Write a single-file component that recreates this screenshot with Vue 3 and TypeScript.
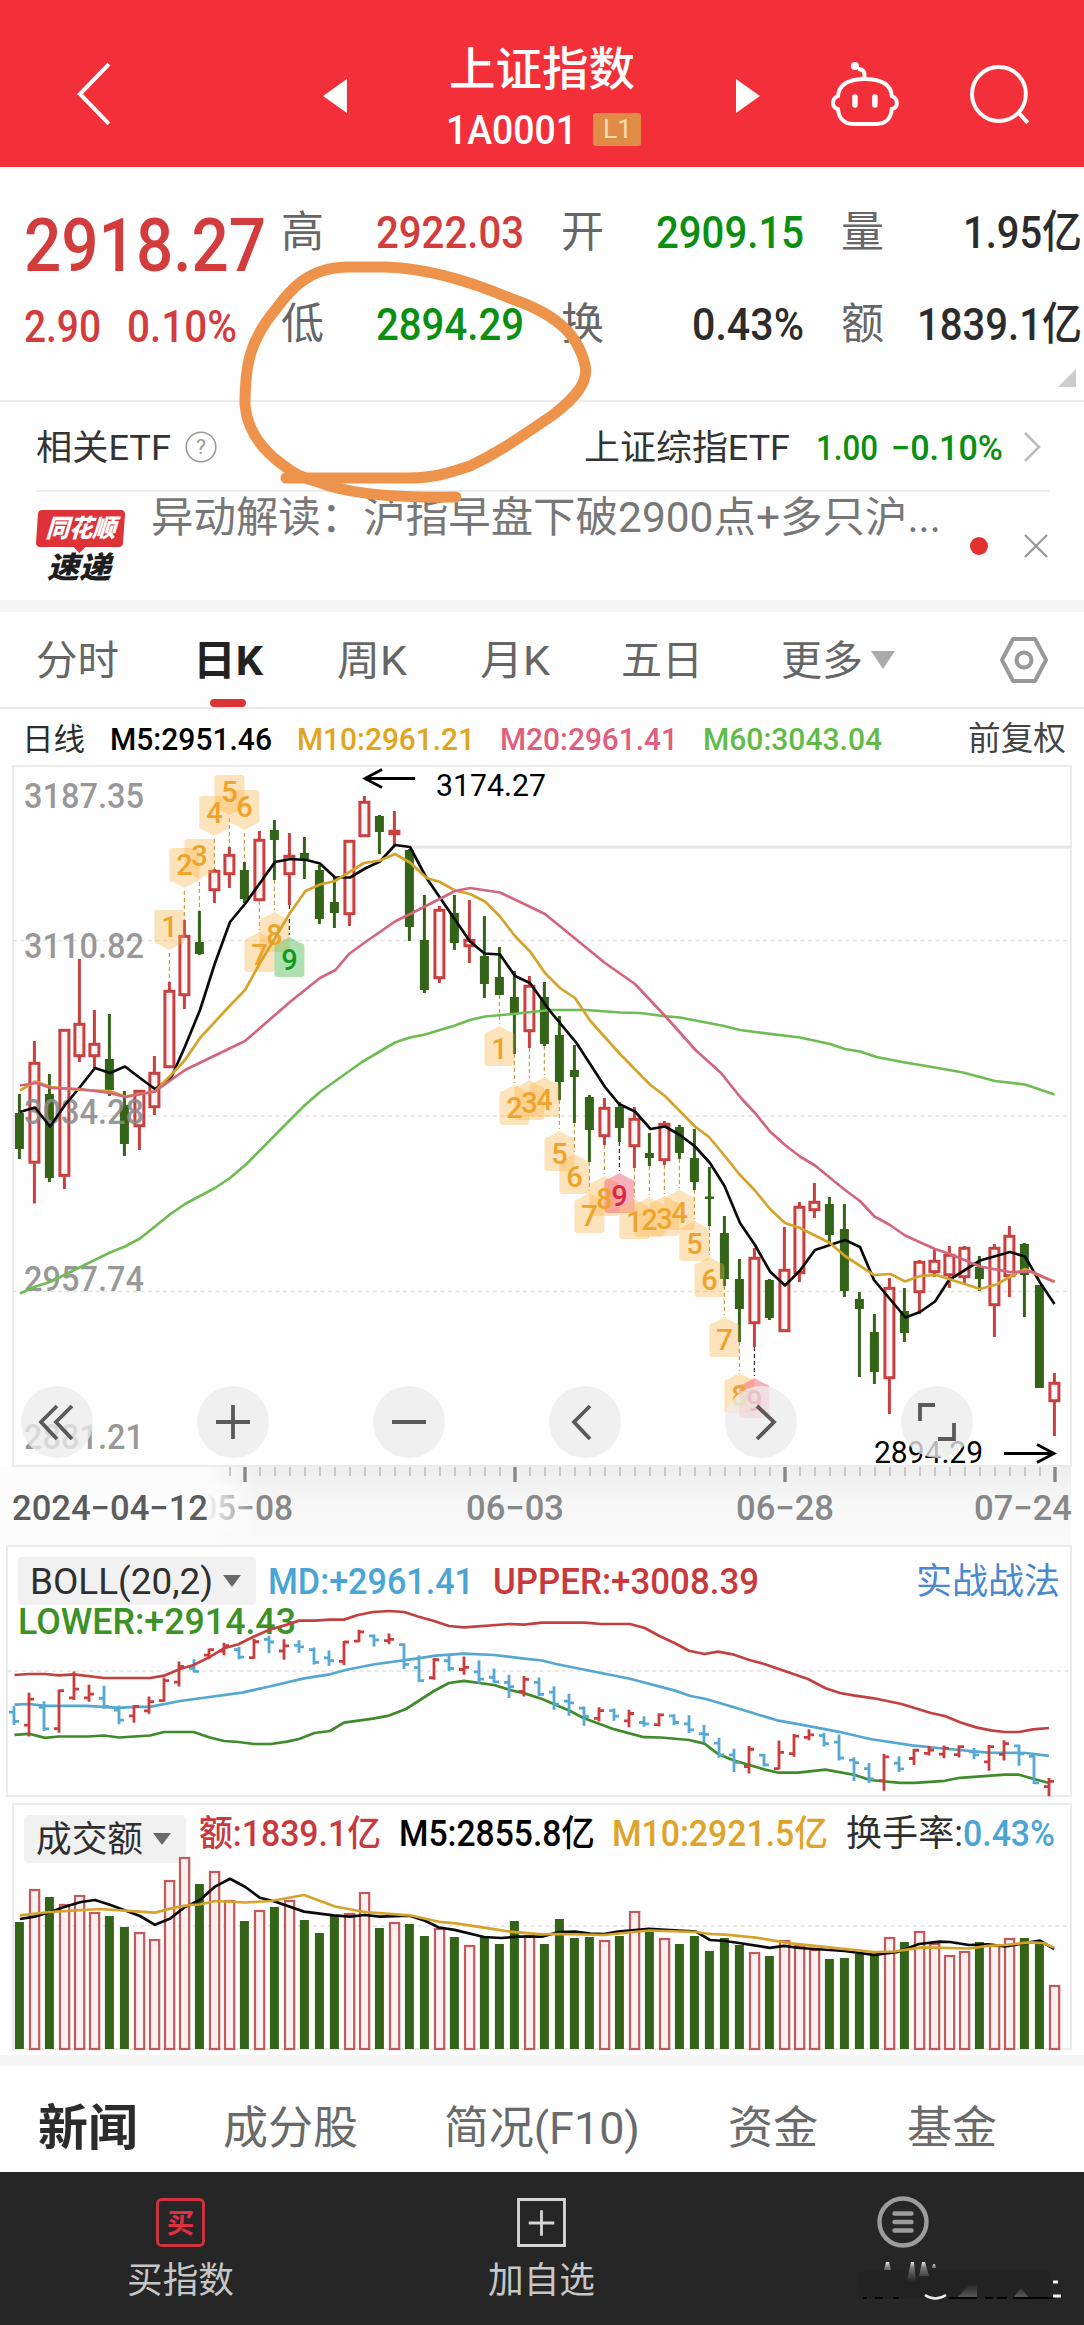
<template>
  <div class="stock-page">
    <!-- 顶部标题栏 -->
    <header class="top-bar">
      <svg class="icon-back" viewBox="0 0 36 64"><path d="M33 2 L4 32 L33 62" /></svg>
      <svg class="icon-prev" viewBox="0 0 24 34"><path d="M24 0 V34 L0 17 Z" /></svg>
      <div class="title-box">
        <FitText text="上证指数" :w="186" :size="46" class="medium" />
        <div class="code-row">
          <FitText text="1A0001" :w="131" :size="40" class="medium" />
          <span class="level"><FitText text="L1" :w="29" :size="26" /></span>
        </div>
      </div>
      <svg class="icon-next" viewBox="0 0 24 34"><path d="M0 0 V34 L24 17 Z" /></svg>
      <svg class="icon-robot" viewBox="0 0 70 66">
        <path d="M35 18 C52 18 61 24 62 35 Q67 37 67 42 Q67 47 62 48 C61 59 54 63 47 63 H23 C16 63 9 59 8 48 Q3 47 3 42 Q3 37 8 35 C9 24 18 18 35 18 Z" />
        <path d="M34 18 C36 11 33 8 28 8" />
        <circle cx="25" cy="5" r="4" class="solid" />
        <path d="M25 36 V44 M45 36 V44" class="eyes" />
      </svg>
      <svg class="icon-search" viewBox="0 0 62 62"><circle cx="29" cy="30" r="27" /><path d="M48 48 L58 59" /></svg>
    </header>

    <!-- 行情数据 -->
    <section class="quote">
      <div class="price-col">
        <FitText text="2918.27" :w="242" :size="74" class="up medium" />
        <div class="change-row">
          <FitText text="2.90" :w="77" :size="44" class="up medium" />
          <FitText text="0.10%" :w="110" :size="44" class="up medium" />
        </div>
      </div>
      <div class="stat-cols">
        <div v-for="item in stats" :key="item.label" class="stat">
          <FitText :text="item.label" :w="43" :size="43" class="stat-label" />
          <FitText :text="item.value" :w="item.w" :size="45" :class="item.cls" class="medium" />
        </div>
      </div>
      <svg class="corner" viewBox="0 0 18 18"><path d="M18 0 V18 H0 Z" /></svg>
    </section>

    <section class="etf-row">
      <FitText text="相关ETF" :w="135" :size="35" />
      <svg class="icon-help" viewBox="0 0 32 32"><circle cx="16" cy="16" r="14.8" /><text x="16" y="23" text-anchor="middle">?</text></svg>
      <div class="etf-right">
        <FitText text="上证综指ETF" :w="206" :size="35" />
        <FitText text="1.00" :w="62" :size="35" class="down medium" />
        <FitText text="−0.10%" :w="112" :size="35" class="down medium" />
        <svg class="icon-more" viewBox="0 0 18 32"><path d="M2 2 L16 16 L2 30" /></svg>
      </div>
    </section>

    <section class="news-row">
      <div class="brand">
        <span class="brand-top"><FitText text="同花顺" :w="70" :size="25" /></span>
        <FitText text="速递" :w="64" :size="30" class="brand-bottom" />
      </div>
      <FitText text="异动解读：沪指早盘下破2900点+多只沪..." :w="790" :size="42" class="news-text" />
      <span class="dot"></span>
      <svg class="icon-close" viewBox="0 0 26 26"><path d="M2 2 L24 24 M24 2 L2 24" /></svg>
    </section>

    <div class="gap"></div>

    <!-- 周期切换 -->
    <nav class="period-tabs">
      <div v-for="tab in periods" :key="tab.text" class="period" :class="{ active: tab.active }">
        <FitText :text="tab.text" :w="tab.w" :size="41" />
      </div>
      <svg class="icon-drop" viewBox="0 0 24 18"><path d="M0 0 H24 L12 18 Z" /></svg>
      <svg class="icon-setting" viewBox="0 0 48 46"><path d="M13 2 H35 L46 23 L35 44 H13 L2 23 Z" /><circle cx="24" cy="23" r="7.5" /></svg>
    </nav>

    <div class="ma-row">
      <FitText text="日线" :w="63" :size="31" class="dark" />
      <FitText text="M5:2951.46" :w="162" :size="32" class="black medium" />
      <FitText text="M10:2961.21" :w="178" :size="32" class="yellow medium" />
      <FitText text="M20:2961.41" :w="178" :size="32" class="pink medium" />
      <FitText text="M60:3043.04" :w="179" :size="32" class="lime medium" />
      <FitText text="前复权" :w="98" :size="33" class="restore" />
    </div>

    <!-- K线主图 -->
    <div class="main-chart">
      <svg class="chart" viewBox="0 765 1084 780" width="1084" height="780">
        <defs>
          <linearGradient id="axisBg" x1="0" y1="0" x2="0" y2="1">
            <stop offset="0" stop-color="#eeeeee" />
            <stop offset="0.5" stop-color="#f7f7f7" />
            <stop offset="1" stop-color="#fafafa" />
          </linearGradient>
          <linearGradient id="axisFade" x1="0" y1="0" x2="1" y2="0">
            <stop offset="0" stop-color="#fcfcfc" />
            <stop offset="0.8" stop-color="#fcfcfc" />
            <stop offset="0.84" stop-color="#fcfcfc" stop-opacity="0.75" />
            <stop offset="1" stop-color="#fcfcfc" stop-opacity="0" />
          </linearGradient>
        </defs>
        <rect x="0" y="1466" width="1071" height="79" fill="url(#axisBg)" />
        <rect x="0" y="1466" width="258" height="79" fill="url(#axisFade)" />
        <rect x="13" y="766" width="1058" height="700" class="frame" />
        <path d="M13 940.5 H1071 M13 1116 H1071 M13 1291.5 H1071" class="grid" />
        <path d="M410 847.3 H1071" class="gap-line" />

        <g v-for="(c, i) in candles" :key="'c' + i" :class="c[0] ? 'candle-up' : 'candle-down'">
          <template v-if="c[0]">
            <path :d="`M${cx(i)} ${c[1]} V${c[2]} M${cx(i)} ${c[3]} V${c[4]}`" />
            <rect :x="cx(i) - 4.5" :y="c[2] + 1.3" width="9" :height="Math.max(c[3] - c[2] - 2.6, 1)" />
          </template>
          <template v-else>
            <path :d="`M${cx(i)} ${c[1]} V${c[4]}`" />
            <rect :x="cx(i) - 4.5" :y="c[2]" width="9" :height="c[3] - c[2]" />
          </template>
        </g>

        <g v-for="(s, k) in signals" :key="'s' + k" :class="'signal-' + s.kind">
          <path :d="signalLine(s)" class="signal-line" />
          <path :d="signalShape(s)" class="signal-tag" />
        </g>
        <text
          v-for="(s, k) in signals"
          :key="'n' + k"
          :x="cx(s.i)"
          :y="s.top + (s.above ? 27 : 33)"
          text-anchor="middle"
          :class="['signal-num', 'num-' + s.kind]"
        >{{ s.n }}</text>

        <text v-for="p in priceLabels" :key="p.text" x="24" :y="p.y" textLength="120" lengthAdjust="spacingAndGlyphs" class="price-label">{{ p.text }}</text>

        <polyline :points="m60" class="line m60" />
        <polyline :points="m5" class="line m5" />
        <polyline :points="m10" class="line m10" />
        <polyline :points="m20" class="line m20" />

        <text x="436" y="796" textLength="110" lengthAdjust="spacingAndGlyphs" class="extreme">3174.27</text>
        <path d="M415 778.5 H365 M382 769.5 L365 778.5 L382 787.5" class="arrow" />
        <text x="874" y="1463" textLength="109" lengthAdjust="spacingAndGlyphs" class="extreme">2894.29</text>
        <path d="M1004 1453.5 H1054 M1037 1444.5 L1054 1453.5 L1037 1462.5" class="arrow" />

        <path :d="minorTicks" class="tick" />
        <path d="M245 1467 V1482 M515 1467 V1482 M785 1467 V1482 M1055 1467 V1482" class="tick-major" />
        <text x="198" y="1520" textLength="95" lengthAdjust="spacingAndGlyphs" class="date">05−08</text>
        <rect x="0" y="1483" width="258" height="50" fill="url(#axisFade)" />
        <text x="12" y="1520" textLength="196" lengthAdjust="spacingAndGlyphs" class="date first">2024−04−12</text>
        <text x="466" y="1520" textLength="98" lengthAdjust="spacingAndGlyphs" class="date">06−03</text>
        <text x="736" y="1520" textLength="98" lengthAdjust="spacingAndGlyphs" class="date">06−28</text>
        <text x="974" y="1520" textLength="98" lengthAdjust="spacingAndGlyphs" class="date">07−24</text>
      </svg>
      <div class="chart-tools">
        <button v-for="t in tools" :key="t.name" class="tool">
          <svg viewBox="0 0 72 72"><path :d="t.d" /></svg>
        </button>
      </div>
    </div>

    <!-- BOLL 指标 -->
    <svg class="chart" viewBox="0 1545 1084 255" width="1084" height="255">
      <rect x="7" y="1546" width="1064" height="250" class="frame" />
      <path d="M7 1671 H1071" class="grid" />
      <rect x="18" y="1557" width="238" height="48" rx="4" class="chip" />
      <path d="M223 1575 H241 L232 1587 Z" class="chip-arrow" />
      <text x="30" y="1594" textLength="183" lengthAdjust="spacingAndGlyphs" class="ind dark">BOLL(20,2)</text>
      <text x="268" y="1594" textLength="206" lengthAdjust="spacingAndGlyphs" class="ind blue">MD:+2961.41</text>
      <text x="493" y="1594" textLength="266" lengthAdjust="spacingAndGlyphs" class="ind red">UPPER:+3008.39</text>
      <text x="916" y="1594" textLength="144" lengthAdjust="spacingAndGlyphs" class="ind link">实战战法</text>
      <text x="18" y="1634" textLength="278" lengthAdjust="spacingAndGlyphs" class="ind green">LOWER:+2914.43</text>
      <polyline :points="bollLower" class="line boll-lower" />
      <polyline :points="bollMid" class="line boll-mid" />
      <path
        v-for="(c, i) in candles"
        :key="i"
        :d="bollBar(c, i)"
        class="boll-bar"
        :class="c[0] ? 'bar-up' : 'bar-down'"
      />
      <polyline :points="bollUpper" class="line boll-upper" />
    </svg>

    <!-- 成交额 -->
    <svg class="chart" viewBox="0 1800 1084 255" width="1084" height="255">
      <rect x="13" y="1804" width="1058" height="245" class="frame" />
      <path d="M13 1926 H1071" class="grid" />
      <rect x="24" y="1815" width="162" height="48" rx="5" class="chip" />
      <g v-for="(v, i) in volumes" :key="i">
        <rect v-if="candles[i][0]" :x="cx(i) - 4.4" :y="v + 1" width="9.2" :height="2048 - v" class="vol-up" />
        <rect v-else :x="cx(i) - 4.5" :y="v" width="9" :height="2049 - v" class="vol-down" />
      </g>
      <path d="M153 1833 H171 L162 1845 Z" class="chip-arrow" />
      <text x="36" y="1852" textLength="107" lengthAdjust="spacingAndGlyphs" class="ind dark">成交额</text>
      <text x="199" y="1846" textLength="182" lengthAdjust="spacingAndGlyphs" class="ind red">额:1839.1亿</text>
      <text x="399" y="1846" textLength="196" lengthAdjust="spacingAndGlyphs" class="ind black">M5:2855.8亿</text>
      <text x="612" y="1846" textLength="216" lengthAdjust="spacingAndGlyphs" class="ind yellow">M10:2921.5亿</text>
      <text x="846" y="1846" textLength="117" lengthAdjust="spacingAndGlyphs" class="ind dark">换手率:</text>
      <text x="963" y="1846" textLength="92" lengthAdjust="spacingAndGlyphs" class="ind blue">0.43%</text>
      <polyline :points="volM5" class="line m5" />
      <polyline :points="volM10" class="line m10" />
    </svg>

    <div class="gap small"></div>

    <nav class="info-tabs">
      <FitText text="新闻" :w="100" :size="49" class="current" />
      <FitText text="成分股" :w="135" :size="45" />
      <FitText text="简况(F10)" :w="196" :size="45" />
      <FitText text="资金" :w="90" :size="45" />
      <FitText text="基金" :w="90" :size="45" />
    </nav>

    <footer class="bottom-bar">
      <div class="action">
        <svg class="action-icon buy" viewBox="0 0 48 48"><rect x="1.5" y="1.5" width="45" height="45" rx="4" /><text x="24" y="34" text-anchor="middle">买</text></svg>
        <FitText text="买指数" :w="107" :size="36" />
      </div>
      <div class="action">
        <svg class="action-icon add" viewBox="0 0 48 48"><path d="M1.5 1.5 H46.5 V46.5 H1.5 Z M24 12 V37 M11.5 24.5 H36.5" /></svg>
        <FitText text="加自选" :w="107" :size="36" />
      </div>
      <div class="action">
        <svg class="action-icon menu" viewBox="0 0 52 52"><circle cx="26" cy="26" r="23.5" /><path d="M17.5 17.5 H34.5 M17.5 26 H34.5 M17.5 34.5 H34.5" /></svg>
        <svg class="smudge" viewBox="0 0 210 42">
          <defs>
            <linearGradient id="streak" x1="0" y1="0" x2="0" y2="1">
              <stop offset="0" stop-color="#e8e8e8" />
              <stop offset="0.3" stop-color="#777777" />
              <stop offset="1" stop-color="#262626" />
            </linearGradient>
            <linearGradient id="patch" x1="0" y1="0" x2="0" y2="1">
              <stop offset="0" stop-color="#262626" />
              <stop offset="1" stop-color="#5c5c5c" />
            </linearGradient>
          </defs>
          <rect x="6" y="9" width="192" height="28" rx="8" fill="#232323" />
          <path d="M33 1 H36 L38 9 H31 Z M58 1 L61 1 L63 20 H54 Z M69 1 H72 L76 15 H66 Z M80 3 H82 L83 7 H79 Z" fill="url(#streak)" />
          <path d="M104 37 L116 24 H124 V37 Z M160 37 L168 27 L176 37 Z" fill="url(#patch)" />
          <path d="M10 37 H14 M22 37 H30 M40 37 H46 M96 37 H124 M132 37 H140 M144 37 H154 M160 37 H202" stroke="#050505" stroke-width="2" fill="none" />
          <path d="M72 34 Q82 41 93 34" stroke="#eee" stroke-width="2.5" fill="none" />
          <path d="M200 21 H205 M200 35 H208" stroke="#f5f5f5" stroke-width="3" fill="none" />
        </svg>
      </div>
    </footer>

    <!-- 手绘圈注 -->
    <svg class="scribble" viewBox="236 255 360 250" width="360" height="250">
      <path d="M286 478 H408 C432 478 446 474 470 466 C500 452 520 437 553 415 C575 398 589 382 585 365 C577 330 550 312 512 299 C465 279 425 268 385 267 H346 C310 268 292 287 276 309 C250 340 245 364 245 405 C247 427 258 447 283 465 C295 475 305 479 318 482 C350 495 400 498 456 497" />
    </svg>
  </div>
</template>

<script setup lang="ts">
import { computed, h } from 'vue'
import type { FunctionalComponent } from 'vue'

// 定宽文字
interface FitProps {
  text: string
  w: number
  size: number
}

const FitText: FunctionalComponent<FitProps> = (props) =>
  h('svg', { width: props.w, height: props.size, style: { display: 'block', overflow: 'visible', flex: 'none' } }, [
    h('text', {
      x: 0,
      y: props.size * 0.86,
      textLength: props.w,
      lengthAdjust: 'spacingAndGlyphs',
      'font-size': props.size,
      fill: 'currentColor'
    }, props.text)
  ])
FitText.props = ['text', 'w', 'size']

// [阳线, 最高, 实体上, 实体下, 最低]
type Candle = [number, number, number, number, number]

interface Signal {
  i: number
  n: number
  top: number
  above: boolean
  kind: string
}

const stats = [
  { label: '高', value: '2922.03', w: 148, cls: 'up' },
  { label: '开', value: '2909.15', w: 148, cls: 'down' },
  { label: '量', value: '1.95亿', w: 119, cls: 'dark' },
  { label: '低', value: '2894.29', w: 148, cls: 'down' },
  { label: '换', value: '0.43%', w: 112, cls: 'dark' },
  { label: '额', value: '1839.1亿', w: 165, cls: 'dark' }
]

const periods = [
  { text: '分时', w: 83, active: false },
  { text: '日K', w: 70, active: true },
  { text: '周K', w: 70, active: false },
  { text: '月K', w: 70, active: false },
  { text: '五日', w: 82, active: false },
  { text: '更多', w: 82, active: false }
]

const tools = [
  { name: 'fast', d: 'M36 20 L20 36 L36 53 M51 20 L35 36 L51 53' },
  { name: 'plus', d: 'M36 19 V53 M19 36 H53' },
  { name: 'minus', d: 'M19 36 H53' },
  { name: 'left', d: 'M41 20 L25 36 L41 53' },
  { name: 'right', d: 'M32 20 L49 36 L32 53' },
  { name: 'full', d: 'M34 19 H19 V35 M37 53 H53 V37' }
]

const priceLabels = [
  { text: '3187.35', y: 808 },
  { text: '3110.82', y: 958 },
  { text: '3034.28', y: 1124 },
  { text: '2957.74', y: 1291 },
  { text: '2881.21', y: 1449 }
]

const candles: Candle[] = [
  [0, 1094, 1113, 1149, 1159], [1, 1041, 1062, 1163.5, 1203.5], [0, 1074, 1094, 1178, 1182], [1, 1029, 1029, 1176.7, 1189],
  [1, 959, 1023, 1057, 1062], [1, 1010, 1043, 1057, 1068], [0, 1014, 1059, 1090, 1096], [0, 1091, 1105, 1144, 1156],
  [1, 1090, 1090, 1127, 1150], [1, 1056, 1072, 1108, 1115], [1, 982, 990, 1068, 1068], [1, 920, 935, 996, 1009],
  [0, 911, 942, 954, 955], [1, 869, 870, 891, 903], [1, 847, 854, 875, 888], [0, 862, 870, 899, 903],
  [1, 831, 839, 901, 901], [0, 820, 830, 840, 880], [1, 833, 855, 875, 905], [0, 837, 853, 859, 879],
  [0, 865, 870, 919, 924], [0, 877, 902, 913, 928], [1, 840, 840, 915, 926], [1, 796, 801, 837, 837],
  [0, 815, 816, 832, 854], [1, 811, 830, 835, 845], [0, 849, 850, 927, 941], [0, 895, 940, 990, 993],
  [1, 906, 909, 979, 983], [0, 895, 913, 943, 950], [1, 900, 939, 947, 963], [0, 916, 956, 984, 998],
  [0, 947, 977, 995, 995], [0, 971, 997, 1014, 1054], [1, 976, 985, 1032, 1048], [0, 982, 997, 1044, 1046],
  [0, 1016, 1035, 1082, 1100], [0, 1045, 1070, 1077, 1123], [0, 1095, 1097, 1130, 1162], [1, 1098, 1107, 1137, 1145],
  [0, 1102, 1107, 1128, 1142], [1, 1107, 1118, 1147, 1168], [0, 1133, 1153, 1158, 1166], [1, 1121, 1123, 1161, 1165],
  [0, 1125, 1127, 1153, 1159], [0, 1129, 1158, 1182, 1190], [0, 1167, 1196.5, 1199, 1226], [0, 1216, 1233, 1279, 1286],
  [0, 1259, 1279, 1309, 1342], [1, 1248, 1257, 1324, 1347], [0, 1279, 1280, 1318, 1320], [1, 1227, 1269, 1332, 1332],
  [1, 1202, 1206, 1274, 1282], [1, 1183, 1201, 1211, 1218], [0, 1197, 1204, 1235, 1242], [0, 1204, 1229, 1291, 1297],
  [0, 1292, 1299, 1309, 1377], [0, 1314, 1332, 1372, 1384], [1, 1278, 1287, 1379, 1414], [0, 1288, 1311, 1333, 1342],
  [1, 1260, 1261, 1293, 1314], [1, 1248, 1260, 1273, 1277], [1, 1246, 1254, 1276, 1288], [1, 1246, 1247, 1278, 1285],
  [0, 1256, 1267, 1279, 1291], [1, 1244, 1247, 1306, 1337], [1, 1226, 1235, 1277, 1297], [0, 1243, 1244, 1275, 1317],
  [0, 1285, 1285, 1388, 1388], [1, 1373, 1382, 1402, 1436]
]

const volumes = [
  1922, 1889, 1897, 1904, 1895, 1912, 1916, 1927, 1932, 1939, 1880, 1857, 1884, 1871, 1900, 1921, 1910, 1907,
  1900, 1920, 1933, 1915, 1913, 1892, 1928, 1922, 1924, 1936, 1928, 1937, 1945, 1937, 1944, 1921, 1935, 1944,
  1919, 1938, 1937, 1940, 1936, 1911, 1932, 1938, 1944, 1936, 1951, 1938, 1945, 1952, 1956, 1940, 1945, 1949,
  1959, 1958, 1954, 1955, 1937, 1942, 1931, 1943, 1955, 1951, 1942, 1945, 1938, 1938, 1941, 1985
]

// 九转信号
const signals: Signal[] = [
  { i: 10, n: 1, top: 910, above: true, kind: 'normal' },
  { i: 11, n: 2, top: 848, above: true, kind: 'normal' },
  { i: 12, n: 3, top: 839, above: true, kind: 'normal' },
  { i: 13, n: 4, top: 796, above: true, kind: 'normal' },
  { i: 14, n: 5, top: 775, above: true, kind: 'normal' },
  { i: 15, n: 6, top: 790, above: true, kind: 'normal' },
  { i: 16, n: 7, top: 932, above: false, kind: 'normal' },
  { i: 17, n: 8, top: 912, above: false, kind: 'normal' },
  { i: 18, n: 9, top: 937, above: false, kind: 'green' },
  { i: 32, n: 1, top: 1026, above: false, kind: 'normal' },
  { i: 33, n: 2, top: 1085, above: false, kind: 'normal' },
  { i: 34, n: 3, top: 1080, above: false, kind: 'normal' },
  { i: 35, n: 4, top: 1077, above: false, kind: 'normal' },
  { i: 36, n: 5, top: 1131, above: false, kind: 'normal' },
  { i: 37, n: 6, top: 1154, above: false, kind: 'normal' },
  { i: 38, n: 7, top: 1193, above: false, kind: 'normal' },
  { i: 39, n: 8, top: 1176, above: false, kind: 'normal' },
  { i: 40, n: 9, top: 1173, above: false, kind: 'red' },
  { i: 41, n: 1, top: 1199, above: false, kind: 'normal' },
  { i: 42, n: 2, top: 1197, above: false, kind: 'normal' },
  { i: 43, n: 3, top: 1196, above: false, kind: 'normal' },
  { i: 44, n: 4, top: 1190, above: false, kind: 'normal' },
  { i: 45, n: 5, top: 1221, above: false, kind: 'normal' },
  { i: 46, n: 6, top: 1257, above: false, kind: 'normal' },
  { i: 47, n: 7, top: 1317, above: false, kind: 'normal' },
  { i: 48, n: 8, top: 1373, above: false, kind: 'normal' },
  { i: 49, n: 9, top: 1378, above: false, kind: 'red' }
]

// 均线
const m5 = '20,1112 35,1107.5 50,1126.5 65,1105 80,1087 95,1068 110,1073 125,1066.5 140,1078 155,1089 171,1078 185,1046.5 200,1010 215,963 230,922 245,904 260,883 275,862 290.5,859 306.5,860 320,863.5 335,877.5 350,877.5 366,868 380,861.5 395,845 410,847 426.5,878 470,941.5 484.5,953.5 500,954.5 515,976 530,983 550,1011 576.5,1043 605,1087 619,1104 635,1111.5 650.5,1129 665,1126.5 680,1135 695,1146.5 710,1163 724.5,1186 740,1223 755,1245 770,1271.5 785,1285.5 800,1270.5 815,1250 845,1240 860,1247 874,1280 905.5,1317.5 920,1312 935,1301.5 949,1280 965,1270 980,1260.5 1010,1252 1025,1256.5 1040,1282.5 1054.5,1304'
const m10 = '20,1090.5 35.5,1081.5 51,1087 80,1090 110,1091 125,1096.5 155,1091.5 171,1075 185,1060 200,1038 230,1005.5 245,990 260,963 290,913 305.5,891 320,884.5 335,881 364,863 380,860.5 395,854 410,862.5 426.5,878 440,882 455,890.5 470,894 485,901.5 500,916.5 515,936 530.5,952 545,973 560,988 575,998 590,1020.5 620,1054 650.5,1085 665,1096 695,1126.5 709,1137 724,1155 740,1175 755,1190.5 770,1209 785,1223 800,1228 830,1243 845,1256 874,1275 890.5,1274 905,1281.5 920,1276 936.5,1275 980,1289 996.5,1284.5 1010.5,1276.5 1025,1269 1040,1276 1054.5,1281.5'
const m20 = '20,1085.5 36,1083 51,1088 80,1089 110,1093 125,1097 155,1091.5 171,1080 185,1070 215,1055.5 245,1041 290.5,1001.5 320,978 335.5,970 349,954 364,943 395,921.5 425,906.5 455,891 470,888 500,892.5 545,914 605,963 635,984 666.5,1017.5 695.5,1050 721,1073 741,1098 755,1113 770,1131.5 785,1145 800,1156.5 815,1165.5 845,1190 860,1201 874.5,1216.5 890,1225 905,1235.5 935,1249 950,1254 980,1266.5 1010,1272 1031.5,1271.5 1054.5,1282'
const m60 = '20,1293.5 35.5,1286.5 50,1282 110,1252.5 125,1246.5 140,1238.5 170.5,1214 185,1204 215,1188 230,1178 246.5,1164 290,1120 305,1105 320,1092 362,1062 395,1042.5 410,1037.5 425,1034.5 455,1025.5 470,1020 485,1016.5 513,1014 550,1010 586.5,1010 620,1012.5 640,1013 663,1016 680,1017.5 724,1026 740,1030 755,1032 800,1037.5 830,1044 845,1049 860,1051.5 876.5,1057 905,1062.5 935,1067.5 963,1072.5 995,1081 1025,1084.5 1054.5,1094.5'

const bollUpper = '14.5,1675 29,1674 45,1674 59,1675.3 74,1674.3 104,1678 150,1678 164,1675.7 180,1669 193.6,1665 209,1657.4 224,1648.3 238.5,1644.2 254,1636.5 269.6,1629.7 287,1624.6 299,1620.6 314.5,1620.6 330,1619.6 344,1619.6 358,1615 373,1612 389,1611 404,1612 418,1616.5 434,1621 449,1626 464,1627.3 510,1624 524,1624.6 542,1622.6 585,1622.6 601,1624 630,1624 644.7,1628 659.5,1636 675,1643.2 689,1650.7 704.5,1654 718,1651.7 734,1654.7 749.4,1660 765,1664.2 808,1679 825.5,1688.2 840,1693 855,1695.6 874,1698.3 901.5,1704 931,1713 944.7,1716 960,1722.3 976,1727.4 991,1730.4 1004.5,1732 1019,1732 1033,1729.4 1049,1728'
const bollMid = '14.5,1704.7 29,1704 45,1705.8 86,1705.8 119,1707.8 135,1706.8 150,1706.8 180,1701 242,1692.6 269.6,1686.5 304,1678.4 330,1674.3 345.7,1670 373,1664.5 418,1658.4 435.5,1655.7 464,1653.7 494,1655 522,1658.4 542,1660.5 556,1664 601,1673 630,1678.7 675,1690.6 690.6,1696 706,1699 735.6,1707.8 777,1720.3 801,1724.7 839,1731.8 870,1739 912,1745.3 938,1748 988,1752.7 1026,1753 1049,1755.8'
const bollLower = '14.5,1734.8 29,1733.8 45,1737.9 59,1736.5 88,1736.5 104,1735.5 119,1737.5 150,1735.5 164,1732 193.6,1732 209,1737.2 224,1741 238.5,1742 254,1744 271,1744 287,1741.6 299,1739 314.5,1733 330,1731 344,1722.7 373,1718.6 389,1715.6 406,1709 434,1691 449,1683 464,1680.8 494,1685 510,1690 525.4,1693.6 542,1699 569.7,1710.8 583.5,1718 614.6,1729.4 644,1737.2 661,1737.5 689,1740 704.5,1743.6 718,1754 734,1760.5 749.4,1765 765,1769.6 779,1772.7 798,1772.7 825.5,1769.6 855,1775 870,1780 900,1782.8 915,1782.8 944.7,1780.8 960,1777.8 1005,1774.7 1019,1774.7 1036,1779.5 1049,1783'

const volM5 = '20,1919 34.6,1916.7 50,1912 65.7,1906.5 81,1902 95,1900 110.6,1905 140,1916 155,1924.8 170.4,1918.4 185,1906.9 200,1900 215,1886.6 230,1878.8 245.4,1887 260,1897.8 275.5,1901.8 304,1911.6 333.6,1915.3 350,1916.7 364.7,1915 380,1916.7 409.6,1915.7 425,1920.7 439,1927.5 454.5,1929.9 484,1937 501,1938 518.5,1936.6 542,1936.6 559,1932 575,1931.6 590,1933.6 604,1934 618,1931.6 649,1928.9 696,1931.6 710,1940 725,1941 739,1943 770,1947.8 784,1945.8 799.5,1948 844.5,1951 874,1954.9 898,1951.8 919,1944 939.5,1941.7 950,1942 969,1945 988,1944.4 1005,1946.4 1040,1940.7 1054,1949'
const volM10 = '20,1915.3 50,1912 100,1909 155,1912.6 170.4,1908.6 190,1904.9 200,1904.5 215,1901 245.4,1902.5 271,1901 304,1895 325,1902.8 335,1906.5 364.7,1912 409.6,1915.3 439,1921.8 456,1923.4 510,1931.6 542,1934.3 559,1934 604,1935 649,1930.5 696,1932 710,1934 725,1934.6 756,1937.6 791,1943.4 829,1947.4 874,1952 894.6,1951.5 922,1947.4 969,1948.5 988,1945.8 1005,1945 1029,1942.4 1043,1943 1054,1947.4'

// 方法
const cx = (i: number) => 19.4 + i * 15

const bollY = (y: number) => 1672.6 + (y - 959) * 0.2572

const bollBar = (c: Candle, i: number) => {
  const x = 14 + i * 15
  const open = bollY(c[0] ? c[3] : c[2])
  const close = bollY(c[0] ? c[2] : c[3])
  return `M${x} ${bollY(c[1]) - 1} V${bollY(c[4]) + 1} M${x - 5} ${open} H${x} M${x} ${close} H${x + 5}`
}

const signalShape = (s: Signal) => {
  const x = cx(s.i)
  const t = s.top
  if (s.above) {
    return `M${x - 12} ${t} H${x + 12} Q${x + 15} ${t} ${x + 15} ${t + 3} V${t + 31} Q${x + 15} ${t + 34} ${x + 11} ${t + 34} L${x} ${t + 40} L${x - 11} ${t + 34} Q${x - 15} ${t + 34} ${x - 15} ${t + 31} V${t + 3} Q${x - 15} ${t} ${x - 12} ${t} Z`
  }
  return `M${x} ${t} L${x + 11} ${t + 6} Q${x + 15} ${t + 6} ${x + 15} ${t + 10} V${t + 37} Q${x + 15} ${t + 40} ${x + 12} ${t + 40} H${x - 12} Q${x - 15} ${t + 40} ${x - 15} ${t + 37} V${t + 10} Q${x - 15} ${t + 6} ${x - 11} ${t + 6} Z`
}

const signalLine = (s: Signal) => {
  const c = candles[s.i]
  return s.above ? `M${cx(s.i)} ${s.top + 43} V${c[1]}` : `M${cx(s.i)} ${c[4]} V${s.top - 2}`
}

const minorTicks = computed(() => {
  let d = ''
  for (let x = 230; x < 1050; x += 15) {
    d += `M${x} 1467 V1476 `
  }
  return d
})
</script>

<style>
body {
  margin: 0;
  background: #fff;
}
</style>

<style scoped>
.stock-page {
  position: relative;
  width: 1084px;
  height: 2325px;
  overflow: hidden;
  background: #fefefe;
  color: #333;
  font-family: Roboto, "Noto Sans CJK SC", sans-serif;
}

.medium {
  font-weight: 500;
}

.up,
.red {
  color: #d23c3c;
  fill: #c8393c;
}

.down {
  color: #0a8f10;
}

.dark {
  color: #2c2c2c;
  fill: #2f2f2f;
}

.black {
  color: #000;
  fill: #000;
}

.yellow {
  color: #dfa51c;
  fill: #e0a32a;
}

.pink {
  color: #df5f7c;
}

.lime {
  color: #62bb48;
}

.blue {
  fill: #4aa5d4;
}

.link {
  fill: #4a88cf;
}

.green {
  fill: #3c9226;
}

/* 顶部 */
.top-bar {
  box-sizing: border-box;
  height: 167px;
  margin-bottom: -1px;
  padding: 38px 52px 0 76px;
  display: flex;
  align-items: center;
  background: #f3303a;
  color: #fff;
}

.top-bar svg path,
.top-bar svg circle {
  fill: none;
  stroke: #fff;
  stroke-width: 4;
}

.icon-back {
  width: 36px;
  height: 64px;
  margin-bottom: 18px;
}

.top-bar .icon-prev,
.top-bar .icon-next {
  width: 24px;
  height: 34px;
  margin-bottom: 14px;
}

.top-bar .icon-prev path,
.top-bar .icon-next path,
.top-bar .solid {
  fill: #fff;
  stroke: none;
}

.icon-prev {
  margin-left: 211px;
}

.icon-next {
  margin-left: 93px;
}

.title-box {
  width: 198px;
  margin-left: 99px;
  height: 128px;
  display: flex;
  flex-direction: column;
  align-items: flex-start;
}

.title-box > svg {
  margin: 6px 0 0 3px;
}

.code-row {
  display: flex;
  align-items: center;
  gap: 16px;
  margin-top: 19px;
}

.level {
  box-sizing: border-box;
  width: 48px;
  height: 33px;
  padding: 3px 0 0 10px;
  background: #e08c46;
  border-radius: 3px;
  color: #fbdcb5;
}

.icon-robot {
  width: 70px;
  height: 66px;
  margin: 0 0 18px 70px;
}

.top-bar .eyes {
  stroke-width: 5.5;
  stroke-linecap: round;
}

.icon-search {
  width: 62px;
  height: 62px;
  margin: 0 0 15px 70px;
}

/* 行情 */
.quote {
  position: relative;
  box-sizing: border-box;
  height: 236px;
  padding: 41px 2px 0 24px;
  display: flex;
  border-bottom: 2px solid #ececec;
}

.price-col {
  width: 257px;
}

.change-row {
  display: flex;
  gap: 26px;
  margin-top: 23px;
}

.stat-cols {
  flex: 1;
  display: grid;
  grid-template-columns: 243px 243px 241px;
  column-gap: 37px;
  grid-template-rows: 49px 49px;
  row-gap: 43px;
}

.stat {
  display: flex;
  justify-content: space-between;
  align-items: center;
}

.stat-label {
  color: #666;
}

.corner {
  position: absolute;
  right: 8px;
  bottom: 13px;
  width: 18px;
  height: 18px;
  fill: #ccc;
}

.etf-row {
  box-sizing: border-box;
  height: 90px;
  margin: 0 35px 0 36px;
  padding-top: 2px;
  display: flex;
  align-items: center;
  border-bottom: 2px solid #ececec;
}

.icon-help {
  width: 32px;
  height: 32px;
  margin-left: 14px;
}

.icon-help circle {
  fill: none;
  stroke: #999;
  stroke-width: 1.6;
}

.icon-help text {
  font-size: 21px;
  fill: #999;
}

.etf-right {
  margin-left: auto;
  display: flex;
  align-items: center;
}

.etf-right svg:nth-child(2) {
  margin-left: 26px;
}

.etf-right svg:nth-child(3) {
  margin-left: 13px;
}

.icon-more {
  width: 18px;
  height: 32px;
  margin: 0 8px 0 20px;
  fill: none;
  stroke: #bbb;
  stroke-width: 2.5;
}

.news-row {
  height: 108px;
  padding: 0 35px 0 37px;
  display: flex;
}

.brand {
  width: 114px;
  padding-top: 18px;
  font-style: italic;
  font-weight: 900;
}

.brand-top {
  box-sizing: border-box;
  display: block;
  position: relative;
  width: 87px;
  height: 37px;
  padding: 5px 0 0 9px;
  background: #dc3238;
  border-radius: 4px;
  transform: skewX(-4deg);
  color: #fff;
}

.brand-top::after {
  content: '';
  position: absolute;
  left: 38px;
  top: 37px;
  border: 6px solid transparent;
  border-top-color: #dc3238;
  border-bottom: none;
}

.brand-bottom {
  margin: 5px 0 0 10px;
  color: #1e1e1e;
}

.news-text {
  margin-top: 4px;
  color: #777;
}

.dot {
  width: 18px;
  height: 18px;
  margin: 45px 0 0 29px;
  border-radius: 50%;
  background: #e2302f;
}

.icon-close {
  width: 26px;
  height: 26px;
  margin: 41px 0 0 35px;
  stroke: #999;
  stroke-width: 2.4;
}

.gap {
  height: 12px;
  background: #f5f5f5;
}

.gap.small {
  height: 11px;
}

/* 周期 */
.period-tabs {
  box-sizing: border-box;
  height: 97px;
  padding: 0 36px;
  display: flex;
  align-items: center;
  border-bottom: 2px solid #e9e9e9;
  color: #666;
}

.period {
  height: 91px;
  margin-right: 74px;
  display: flex;
  flex-direction: column;
  justify-content: space-between;
  align-items: center;
}

.period > svg {
  margin-top: 26px;
}

.period:nth-child(3) {
  margin-right: 73px;
}

.period:nth-child(4) {
  margin-right: 71px;
}

.period:nth-child(5) {
  margin-right: 78px;
}

.period:nth-child(6) {
  margin-right: 8px;
}

.period.active {
  color: #222;
  font-weight: 700;
}

.period.active::after {
  content: '';
  width: 36px;
  height: 8px;
  margin-bottom: -2px;
  border-radius: 4px;
  background: #da3434;
}

.icon-drop {
  width: 24px;
  height: 18px;
  fill: #aaa;
}

.icon-setting {
  width: 48px;
  height: 46px;
  margin-left: auto;
  fill: none;
  stroke: #999;
  stroke-width: 4;
  stroke-linejoin: round;
}

.ma-row {
  height: 56px;
  padding: 2px 18px 0 22px;
  box-sizing: border-box;
  display: flex;
  align-items: center;
  gap: 25px;
}

.restore {
  margin-left: auto;
  color: #444;
}

/* 图表 */
.chart {
  display: block;
}

.frame {
  fill: none;
  stroke: #ebebeb;
  stroke-width: 2;
}

.grid {
  fill: none;
  stroke: #e2e2e2;
  stroke-width: 1.3;
  stroke-dasharray: 4 3.5;
}

.gap-line {
  stroke: #e6e6e6;
  stroke-width: 3;
}

.candle-up path,
.candle-up rect {
  fill: none;
  stroke: #c8403f;
  stroke-width: 3;
}

.candle-up rect {
  fill: #fff5f5;
  fill-opacity: 0.8;
}

.candle-down path {
  stroke: #336418;
  stroke-width: 3;
}

.candle-down rect {
  fill: #336418;
}

.line {
  fill: none;
  stroke-width: 2.7;
  stroke-linejoin: round;
}

.m5 {
  stroke: #0a0a0a;
}

.m10 {
  stroke: #d5a32a;
}

.m20 {
  stroke: #d3667e;
}

.m60 {
  stroke: #6fbb54;
}

.signal-line {
  fill: none;
  stroke: #c4a04c;
  stroke-width: 1.2;
  stroke-dasharray: 4 3;
}

.signal-green .signal-line,
.signal-red .signal-line {
  stroke: #333;
}

.signal-tag {
  fill: #fdb545;
  fill-opacity: 0.36;
}

.signal-green .signal-tag {
  fill: #4fbd57;
  fill-opacity: 0.45;
}

.signal-red .signal-tag {
  fill: #f25568;
  fill-opacity: 0.45;
}

.signal-num {
  font-size: 29px;
  font-weight: 500;
  fill: #eda32c;
}

.num-green {
  fill: #0f9a1c;
}

.num-red {
  fill: #d42a44;
}

.price-label {
  font-size: 35px;
  font-weight: 500;
  fill: #8a8a8a;
  fill-opacity: 0.88;
}

.extreme {
  font-size: 31px;
  fill: #000;
}

.arrow {
  fill: none;
  stroke: #000;
  stroke-width: 2.8;
}

.tick {
  stroke: #bdbdbd;
  stroke-width: 1.6;
}

.tick-major {
  stroke: #888;
  stroke-width: 3.4;
}

.date {
  font-size: 35px;
  font-weight: 500;
  fill: #888;
}

.date.first {
  fill: #5c5c5c;
}

.main-chart {
  position: relative;
}

.chart-tools {
  position: absolute;
  left: 21px;
  top: 621px;
  display: flex;
  gap: 104px;
}

.tool {
  width: 72px;
  height: 72px;
  padding: 0;
  border: none;
  border-radius: 50%;
  background: rgba(236, 236, 236, 0.78);
}

.tool svg {
  display: block;
  fill: none;
  stroke: #5a5a5a;
  stroke-width: 3.8;
}

.chip {
  fill: #f1f1f1;
}

.chip-arrow {
  fill: #6a6a6a;
}

.ind {
  font-size: 36px;
  font-weight: 500;
}

.ind.dark,
.ind.link {
  font-weight: 400;
}

.boll-upper {
  stroke: #c2403f;
}

.boll-mid {
  stroke: #55a7d1;
}

.boll-lower {
  stroke: #3f8a2a;
}

.boll-bar {
  fill: none;
  stroke-width: 2.8;
}

.bar-up {
  stroke: #cb3d3d;
}

.bar-down {
  stroke: #56a9d4;
}

.vol-up {
  fill: #fdf0f1;
  stroke: #c2595c;
  stroke-width: 2.2;
}

.vol-down {
  fill: #336418;
}

/* 底部 */
.info-tabs {
  height: 106px;
  padding: 16px 0 0 38px;
  box-sizing: border-box;
  display: flex;
  align-items: center;
  gap: 85px;
  color: #6a6a6a;
}

.info-tabs svg:nth-child(3) {
  margin: 0 3px 0 1px;
}

.info-tabs svg:nth-child(5) {
  margin-left: 4px;
}

.info-tabs .current {
  font-weight: 700;
  color: #2c2c2c;
}

.bottom-bar {
  height: 153px;
  display: grid;
  grid-template-columns: repeat(3, 361px);
  background: #262626;
  color: #c6c6c6;
}

.action {
  display: flex;
  flex-direction: column;
  align-items: center;
}

.action-icon {
  width: 49px;
  height: 49px;
  margin: 26px 0 15px;
  fill: none;
  stroke-width: 2.8;
}

.buy rect {
  stroke: #d2333f;
}

.buy text {
  font-size: 27px;
  font-weight: 700;
  fill: #e0303f;
}

.add {
  stroke: #d5d5d5;
}

.menu {
  width: 52px;
  height: 52px;
  margin: 24px 0 12px;
  stroke: #9c9c9c;
  stroke-width: 4.4;
  stroke-linecap: round;
}

.smudge {
  width: 210px;
  height: 42px;
  margin: 1px 0 0 110px;
}

.scribble {
  position: absolute;
  left: 236px;
  top: 255px;
  fill: none;
  stroke: #ee934b;
  stroke-width: 11;
  stroke-linecap: round;
  stroke-linejoin: round;
}
</style>
